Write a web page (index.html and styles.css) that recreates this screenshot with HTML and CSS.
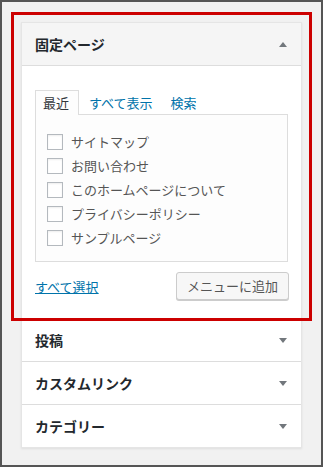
FILE: index.html
```html
<!DOCTYPE html>
<html lang="ja">
<head>
  <meta charset="UTF-8"/>
  <meta name="viewport" content="width=device-width, initial-scale=1"/>
  <title>メニュー項目を追加</title>
  <link rel="stylesheet" href="styles.css">
</head>
<body>
  <div class="frame">
    <div class="menu-panel">
      <section class="acc open">
        <h3 class="acc-title">固定ページ<span class="arrow up"></span></h3>
        <div class="acc-content">
          <ul class="tabs">
            <li class="active">最近</li>
            <li><a href="#">すべて表示</a></li>
            <li><a href="#">検索</a></li>
          </ul>
          <div class="tab-panel">
            <ul class="checklist">
              <li><label><input type="checkbox"/>サイトマップ</label></li>
              <li><label><input type="checkbox"/>お問い合わせ</label></li>
              <li><label><input type="checkbox"/>このホームページについて</label></li>
              <li><label><input type="checkbox"/>プライバシーポリシー</label></li>
              <li><label><input type="checkbox"/>サンプルページ</label></li>
            </ul>
          </div>
          <div class="actions">
            <a href="#" class="select-all">すべて選択</a>
            <button class="btn-add" type="button">メニューに追加</button>
          </div>
        </div>
      </section>
      <section class="acc">
        <h3 class="acc-title">投稿<span class="arrow"></span></h3>
      </section>
      <section class="acc">
        <h3 class="acc-title">カスタムリンク<span class="arrow"></span></h3>
      </section>
      <section class="acc">
        <h3 class="acc-title">カテゴリー<span class="arrow"></span></h3>
      </section>
    </div>
    <div class="highlight"></div>
  </div>
</body>
</html>
```

FILE: styles.css
```css
* { box-sizing: border-box; }
body { margin: 0; font-family: "Noto Sans CJK JP", "Noto Sans", sans-serif; color: #444; }
.frame { position: relative; width: 323px; height: 467px; border: 2px solid #555; background: #f1f1f1; padding: 20px 0 0 19px; }
.menu-panel { width: 281px; background: #fff; border: 1px solid #e5e5e5; box-shadow: 0 1px 2px rgba(0,0,0,.08); }

.acc { border-bottom: 1px solid #ddd; }
.acc:last-child { border-bottom: none; }
.acc-title {
  margin: 0; height: 42px; padding: 0 14px 0 13px; display: flex; align-items: center; justify-content: space-between;
  font-size: 14px; font-weight: bold; line-height: 20px; color: #23282d;
}
.acc.open .acc-title { background: #f5f5f5; border-bottom: 1px solid #ddd; height: 43px; }
.arrow { width: 0; height: 0; border-left: 4px solid transparent; border-right: 4px solid transparent; border-top: 5px solid #72777c; }
.arrow.up { border-top: none; border-bottom: 5px solid #72777c; }

.acc-content { padding: 24px 13px 18px 13px; }
.tabs { list-style: none; margin: 0 0 -1px 0; padding: 0; display: flex; gap: 2px; font-size: 13px; line-height: 16px; }
.tabs li { padding: 5px 8px 4px 8px; }
.tabs li.active { position: relative; z-index: 1; border: 1px solid #ddd; border-bottom: none; background: #fdfdfd; padding: 4px 9px 4px 7px; color: #32373c; }
.tabs a { color: #0073aa; text-decoration: none; }

.tab-panel { border: 1px solid #ddd; background: #fdfdfd; padding: 15px 11px 11px 11px; }
.checklist { list-style: none; margin: 0; padding: 0; }
.checklist label { display: flex; align-items: center; height: 24px; font-size: 13px; line-height: 16px; color: #555; }
.checklist input {
  appearance: none; -webkit-appearance: none; width: 16px; height: 16px; margin: 0 8px 0 0;
  border: 1px solid #b4b9be; background: #fff; box-shadow: inset 0 1px 2px rgba(0,0,0,.07); border-radius: 0;
}

.actions { margin-top: 10px; display: flex; align-items: center; justify-content: space-between; }
.select-all { color: #0073aa; font-size: 13px; line-height: 16px; text-decoration: underline; margin-top: 2px; }
.btn-add {
  height: 28px; padding: 0 10px; margin-right: -1px; border: 1px solid #ccc; border-radius: 3px; background: #f7f7f7;
  box-shadow: 0 1px 0 #ccc; color: #555; font-family: inherit; font-size: 13px; line-height: 16px; cursor: pointer;
}

.highlight { position: absolute; left: 9px; top: 10px; width: 301px; height: 309px; border: 3px solid #c00; pointer-events: none; }
```
